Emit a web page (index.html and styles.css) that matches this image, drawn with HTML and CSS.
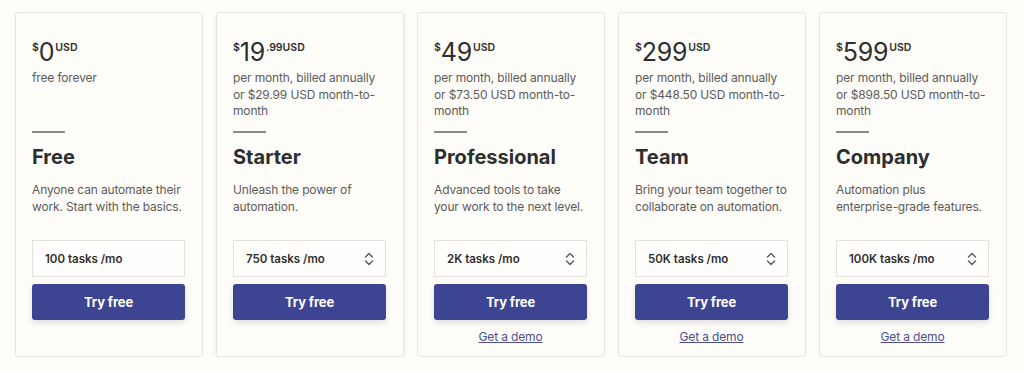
FILE: index.html
```html
<!DOCTYPE html>
<html lang="en">
<head>
<meta charset="utf-8">
<title>Pricing</title>
<link rel="stylesheet" href="styles.css">
</head>
<body>
<div class="plans">
  <div class="card">
    <div class="price"><span class="cur">$</span><span class="amt">0</span><span class="sup">USD</span></div>
    <p class="billing">free forever</p>
    <div class="rule"></div>
    <h2 class="name">Free</h2>
    <p class="desc">Anyone can automate their work. Start with the basics.</p>
    <div class="select plain"><span>100 tasks /mo</span></div>
    <button class="btn">Try free</button>
  </div>
  <div class="card raised">
    <div class="price"><span class="cur">$</span><span class="amt">19</span><span class="sup">.99USD</span></div>
    <p class="billing">per month, billed annually or $29.99 USD month-to-month</p>
    <div class="rule"></div>
    <h2 class="name">Starter</h2>
    <p class="desc">Unleash the power of automation.</p>
    <div class="select"><span>750 tasks /mo</span><svg class="chev" width="10" height="16" viewBox="0 0 10 16"><path d="M1.5 6 L5 2.5 L8.5 6 M1.5 10 L5 13.5 L8.5 10" fill="none" stroke="#5c5b5a" stroke-width="1.4" stroke-linecap="round" stroke-linejoin="round"/></svg></div>
    <button class="btn">Try free</button>
  </div>
  <div class="card">
    <div class="price"><span class="cur">$</span><span class="amt">49</span><span class="sup">USD</span></div>
    <p class="billing">per month, billed annually or $73.50 USD month-to-month</p>
    <div class="rule"></div>
    <h2 class="name">Professional</h2>
    <p class="desc">Advanced tools to take your work to the next level.</p>
    <div class="select"><span>2K tasks /mo</span><svg class="chev" width="10" height="16" viewBox="0 0 10 16"><path d="M1.5 6 L5 2.5 L8.5 6 M1.5 10 L5 13.5 L8.5 10" fill="none" stroke="#5c5b5a" stroke-width="1.4" stroke-linecap="round" stroke-linejoin="round"/></svg></div>
    <button class="btn">Try free</button>
    <a class="demo" href="#">Get a demo</a>
  </div>
  <div class="card">
    <div class="price"><span class="cur">$</span><span class="amt">299</span><span class="sup">USD</span></div>
    <p class="billing">per month, billed annually or $448.50 USD month-to-month</p>
    <div class="rule"></div>
    <h2 class="name">Team</h2>
    <p class="desc">Bring your team together to collaborate on automation.</p>
    <div class="select"><span>50K tasks /mo</span><svg class="chev" width="10" height="16" viewBox="0 0 10 16"><path d="M1.5 6 L5 2.5 L8.5 6 M1.5 10 L5 13.5 L8.5 10" fill="none" stroke="#5c5b5a" stroke-width="1.4" stroke-linecap="round" stroke-linejoin="round"/></svg></div>
    <button class="btn">Try free</button>
    <a class="demo" href="#">Get a demo</a>
  </div>
  <div class="card">
    <div class="price"><span class="cur">$</span><span class="amt">599</span><span class="sup">USD</span></div>
    <p class="billing">per month, billed annually or $898.50 USD month-to-month</p>
    <div class="rule"></div>
    <h2 class="name">Company</h2>
    <p class="desc">Automation plus enterprise-grade features.</p>
    <div class="select"><span>100K tasks /mo</span><svg class="chev" width="10" height="16" viewBox="0 0 10 16"><path d="M1.5 6 L5 2.5 L8.5 6 M1.5 10 L5 13.5 L8.5 10" fill="none" stroke="#5c5b5a" stroke-width="1.4" stroke-linecap="round" stroke-linejoin="round"/></svg></div>
    <button class="btn">Try free</button>
    <a class="demo" href="#">Get a demo</a>
  </div>
</div>
</body>
</html>
```
FILE: styles.css
```css
* { box-sizing: border-box; }
html, body { margin: 0; padding: 0; }
body {
  background: #fffdf9;
  font-family: Inter, "Noto Sans", sans-serif;
  color: #2d2e2e;
}
.plans {
  display: flex;
  gap: 13px;
  padding: 12px 15px 0 15px;
}
.card {
  width: 188px;
  height: 345px;
  border: 1px solid #e7e5e0;
  border-radius: 3px;
  background: #fffdf9;
  padding: 27px 17px 0 16px;
  display: flex;
  flex-direction: column;
}
.card.raised {
  box-shadow: 0 2px 6px rgba(0,0,0,0.08);
}
.price {
  display: flex;
  align-items: flex-start;
  height: 30px;
  line-height: 1;
}
.cur {
  font-size: 10.5px;
  font-weight: 600;
  margin-top: 3px;
}
.amt {
  font-size: 25px;
  font-weight: 400;
  letter-spacing: -0.3px;
}
.sup {
  font-size: 10.5px;
  font-weight: 600;
  margin-top: 3px;
  margin-left: 1px;
}
.billing {
  margin: 0;
  font-size: 12px;
  letter-spacing: -0.15px;
  line-height: 16.5px;
  color: #5c5b5a;
  height: 50px;
}
.rule {
  width: 33px;
  height: 2px;
  background: #8a8987;
  margin-top: 11px;
}
.name {
  margin: 12px 0 0 0;
  font-size: 20px;
  font-weight: 700;
  line-height: 24px;
  color: #2d2e2e;
}
.desc {
  margin: 11.5px 0 0 0;
  font-size: 12px;
  letter-spacing: -0.15px;
  line-height: 17px;
  color: #5c5b5a;
  height: 34px;
}
.select {
  margin-top: 25.5px;
  height: 37px;
  border: 1px solid #e3e1dc;
  background: #fffefc;
  display: flex;
  align-items: center;
  justify-content: space-between;
  padding: 0 11px 0 12px;
  font-size: 11.5px;
  font-weight: 600;
  color: #2d2e2e;
}
.chev { display: block; }
.btn {
  margin-top: 7px;
  height: 36px;
  border: none;
  border-radius: 3px;
  background: #3d4592;
  color: #ffffff;
  font-family: Inter, "Noto Sans", sans-serif;
  font-size: 13px;
  font-weight: 700;
  letter-spacing: -0.1px;
  box-shadow: 0 3px 6px rgba(0,0,0,0.12);
  cursor: pointer;
}
.demo {
  margin-top: 9px;
  text-align: center;
  font-size: 12px;
  letter-spacing: -0.15px;
  line-height: 16px;
  color: #4b4f8f;
  text-decoration: underline;
}
```
